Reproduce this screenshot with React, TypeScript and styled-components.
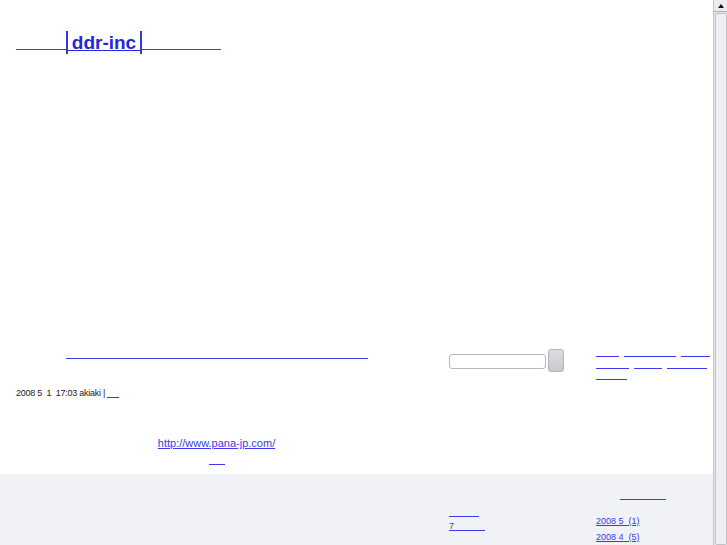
import React from 'react';
import styled, { createGlobalStyle } from 'styled-components';

const GlobalStyle = createGlobalStyle`
  html, body {
    margin: 0;
    padding: 0;
    background: #ffffff;
  }
  body {
    font-family: "Liberation Sans", Arial, sans-serif;
    color: #222;
  }
`;

const linkBlue = '#3a3aee';

const Frame = styled.div`
  display: flex;
  width: 727px;
  height: 545px;
  overflow: hidden;
`;

const Page = styled.div`
  flex: 1;
  display: flex;
  flex-direction: column;
  min-width: 0;
`;

const Header = styled.header`
  height: 347px;
  padding: 31px 16px 0;
  box-sizing: border-box;
`;

const SiteTitle = styled.a`
  font-size: 19px;
  font-weight: bold;
  line-height: 24px;
  color: #2626e0;
  text-decoration: underline;
  text-underline-offset: 1px;
  cursor: pointer;
`;

const Bar = styled.span`
  display: inline-block;
  width: 2px;
  height: 23px;
  background: #3636e6;
  vertical-align: -5px;
`;

// blank underline standing in for text the browser had no glyphs for
const Blank = styled.span<{ $w: number; $drop?: number }>`
  display: inline-block;
  width: ${(p) => p.$w}px;
  height: 0;
  border-bottom: 1px solid ${linkBlue};
  vertical-align: ${(p) => -(p.$drop ?? 2)}px;
  cursor: pointer;
`;

const Columns = styled.div`
  display: grid;
  grid-template-columns: 449px 147px 1fr;
`;

const MainCol = styled.div`
  padding: 0 32px 0 16px;
`;

const PostTitle = styled.h2`
  margin: 0;
  font-size: 13px;
  line-height: 16px;
  text-align: center;
  font-weight: normal;
`;

const PostMeta = styled.div`
  margin-top: 25px;
  font-size: 9px;
  line-height: 12px;
  letter-spacing: -0.25px;
  color: #222;
`;

const PostLink = styled.a`
  display: block;
  margin-top: 37px;
  font-size: 11px;
  line-height: 14px;
  text-align: center;
  color: ${linkBlue};
  text-decoration: underline;
`;

const PostFoot = styled.div`
  margin-top: 1px;
  text-align: center;
  line-height: 14px;
`;

const SearchCol = styled.div`
  display: flex;
  align-items: flex-start;
  gap: 2px;
  padding-top: 3px;
`;

const SearchInput = styled.input`
  width: 97px;
  height: 15px;
  margin-top: 5px;
  box-sizing: border-box;
  border: 1px solid #b8b8b8;
  border-radius: 3px;
  background: #fff;
  padding: 0 3px;
  font-size: 10px;
`;

const SearchButton = styled.button`
  width: 16px;
  height: 23px;
  box-sizing: border-box;
  border: 1px solid #b4b4bc;
  border-radius: 3px;
  background: linear-gradient(#dcdce2, #c8c8d0);
  padding: 0;
`;

const SideCol = styled.div`
  padding-right: 3px;
`;

const TagCloud = styled.div`
  font-size: 10px;
  line-height: 11.5px;
  display: flex;
  flex-wrap: wrap;
  column-gap: 5px;
`;

const Footer = styled.footer`
  margin-top: 9px;
  flex: 1;
  background: #f0f2f6;
`;

const FooterMain = styled.div``;

const FooterMid = styled.div`
  padding-top: 31px;
  font-size: 9px;
  line-height: 14px;
`;

const FooterLine = styled.div`
  color: ${linkBlue};
`;

const FooterSide = styled.div`
  padding-top: 12px;
`;

const SideHeading = styled.div`
  padding-left: 24px;
  line-height: 14px;
`;

const ArchiveList = styled.ul`
  list-style: none;
  margin: 13px 0 0;
  padding: 0;
  font-size: 9px;
  line-height: 16px;
`;

const ArchiveLink = styled.a`
  color: ${linkBlue};
  text-decoration: underline;
  cursor: pointer;
`;

const Scrollbar = styled.div`
  width: 13px;
  display: flex;
  flex-direction: column;
  background: #e6e6ea;
  border-left: 1px solid #c4c4c8;
`;

const ArrowButton = styled.div`
  height: 11px;
  display: flex;
  align-items: center;
  justify-content: center;
  background: #ececf0;
  border-bottom: 1px solid #b0b0b4;
  &::after {
    content: '';
    border-left: 3px solid transparent;
    border-right: 3px solid transparent;
    border-bottom: 4px solid #111;
  }
`;

const Thumb = styled.div`
  flex: 1;
  margin: 1px 0 0 1px;
  background: #eeeef4;
  border: 1px solid #c2c2c8;
  border-radius: 2px;
`;

const tags = [23, 52, 29, 33, 28, 40, 31];

export default function App() {
  return (
    <Frame>
      <GlobalStyle />
      <Page>
        <Header>
          <SiteTitle>
            <Blank $w={50} $drop={1} />
            <Bar />
            {'\u2009ddr-inc\u2009'}
            <Bar />
            <Blank $w={79} $drop={1} />
          </SiteTitle>
        </Header>

        <Columns>
          <MainCol>
            <PostTitle>
              <Blank $w={302} $drop={1} />
            </PostTitle>
            <PostMeta>
              2008 5 &nbsp;1 &nbsp;17:03 akiaki | <Blank $w={12} />
            </PostMeta>
            <PostLink>http://www.pana-jp.com/</PostLink>
            <PostFoot>
              <Blank $w={16} />
            </PostFoot>
          </MainCol>
          <SearchCol>
            <SearchInput type="text" />
            <SearchButton type="button" />
          </SearchCol>
          <SideCol>
            <TagCloud>
              {tags.map((w, i) => (
                <span key={i}>
                  <Blank $w={w} />
                </span>
              ))}
            </TagCloud>
          </SideCol>
        </Columns>

        <Footer>
          <Columns>
            <FooterMain />
            <FooterMid>
              <FooterLine>
                <Blank $w={30} />
              </FooterLine>
              <FooterLine>
                <ArchiveLink>7</ArchiveLink>
                <Blank $w={31} />
              </FooterLine>
            </FooterMid>
            <FooterSide>
              <SideHeading>
                <Blank $w={46} />
              </SideHeading>
              <ArchiveList>
                <li>
                  <ArchiveLink>2008 5 &nbsp;(1)</ArchiveLink>
                </li>
                <li>
                  <ArchiveLink>2008 4 &nbsp;(5)</ArchiveLink>
                </li>
              </ArchiveList>
            </FooterSide>
          </Columns>
        </Footer>
      </Page>
      <Scrollbar>
        <ArrowButton />
        <Thumb />
      </Scrollbar>
    </Frame>
  );
}
